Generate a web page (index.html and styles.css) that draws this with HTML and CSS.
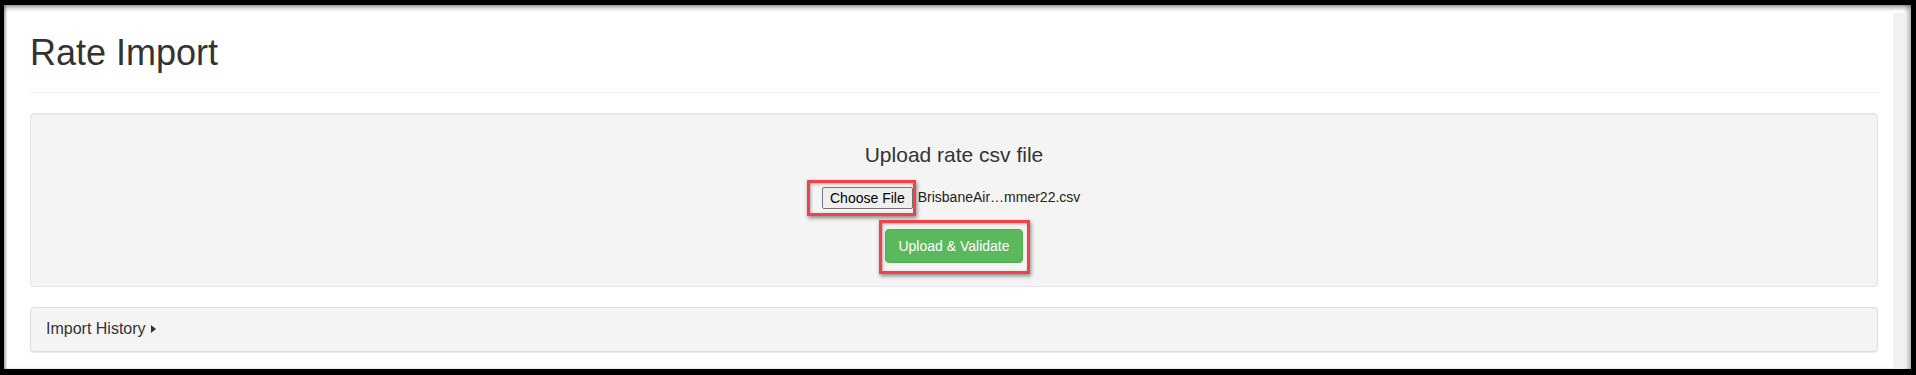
FILE: index.html
```html
<!DOCTYPE html>
<html lang="en">
<head>
  <meta charset="UTF-8" />
  <meta name="viewport" content="width=device-width, initial-scale=1" />
  <title>Rate Import</title>
  <link rel="stylesheet" href="styles.css">
</head>

<body>
  <div class="frame">
    <div class="window">
      <!-- Page content -->
      <main class="content">
        <div class="page-header">
          <h1>Rate Import</h1>
        </div>

        <!-- Upload box -->
        <div class="well upload">
          <h3>Upload rate csv file</h3>
          <div class="file-row">
            <span class="file-input">
              <span class="file-btn">Choose File<span class="mark mark-file"></span></span>
              <span class="file-name">BrisbaneAir…mmer22.csv</span>
            </span>
          </div>
          <div class="submit-row">
            <button class="btn btn-success" type="button">Upload &amp; Validate<span class="mark mark-submit"></span></button>
          </div>
        </div>

        <!-- History -->
        <div class="panel">
          <div class="panel-heading">Import History <span class="caret-right"></span></div>
        </div>
      </main>

      <div class="scroll-track"></div>
    </div>
  </div>
</body>
</html>
```

FILE: styles.css
```css
* {
  box-sizing: border-box;
}

body {
  margin: 0;
  height: 375px;
  overflow: hidden;
  background: #000;
  font-family: 'Liberation Sans', Arial, sans-serif;
  font-size: 14px;
  line-height: 1.42857;
  color: #333;
}

.frame {
  height: 100%;
  padding: 5px 5px 6px 4px;
}

.window {
  height: 100%;
  display: flex;
  background: #fff;
  padding-right: 6px;
  box-shadow:
    inset 0 4px 4px -1px rgba(0, 0, 0, 0.35),
    inset 2px 0 2px rgba(0, 0, 0, 0.25),
    inset -6px 0 4px -2px rgba(0, 0, 0, 0.22);
}

.content {
  flex: 1;
  padding: 28px 15px 0 26px;
}

.scroll-track {
  width: 12px;
  margin-top: 8px;
  background: #f1f1f1;
}

.page-header {
  padding-bottom: 9px;
  margin-bottom: 20px;
  border-bottom: 1px solid #eee;
}

.page-header h1 {
  margin: 0 0 10px;
  font-size: 36px;
  font-weight: 500;
  line-height: 1.1;
}

.well {
  background: #f4f4f4;
  border: 1px solid #e3e3e3;
  border-radius: 4px;
  box-shadow: inset 0 1px 1px rgba(0, 0, 0, 0.05);
  margin-bottom: 20px;
}

.upload {
  padding: 19px 19px 23px;
  text-align: center;
}

.upload h3 {
  margin: 10px 0 21px;
  font-size: 21px;
  font-weight: 500;
  line-height: 1.1;
}

.file-row {
  display: flex;
  justify-content: center;
}

.file-input {
  width: 264px;
  display: inline-flex;
  align-items: center;
  text-align: left;
}

.file-btn {
  position: relative;
  height: 22px;
  padding: 2px 7px;
  font-size: 14px;
  line-height: 16px;
  color: #000;
  background: #efefef;
  border: 1px solid #767676;
  border-radius: 2px;
  white-space: nowrap;
}

.file-name {
  margin-left: 5px;
  color: #222;
  white-space: nowrap;
}

.submit-row {
  margin-top: 20px;
}

.btn {
  position: relative;
  display: inline-block;
  padding: 6px 12px;
  font-family: inherit;
  font-size: 14px;
  line-height: 20px;
  border: 1px solid transparent;
  border-radius: 4px;
  cursor: pointer;
}

.btn-success {
  color: #fff;
  background-color: #5cb85c;
  border-color: #4cae4c;
}

/* red annotation boxes */
.mark {
  position: absolute;
  border: 3px solid #ef4349;
  box-shadow: 1px 2px 4px rgba(0, 0, 0, 0.45), inset 1px 1px 3px rgba(0, 0, 0, 0.3);
  pointer-events: none;
}

.mark-file {
  top: -8px;
  bottom: -8px;
  left: -16px;
  right: -4px;
}

.mark-submit {
  top: -10px;
  bottom: -12px;
  left: -7px;
  right: -8px;
}

.panel {
  background: #f4f4f4;
  border: 1px solid #ddd;
  border-radius: 4px;
  box-shadow: 0 1px 1px rgba(0, 0, 0, 0.08);
}

.panel-heading {
  padding: 10px 15px;
  font-size: 16px;
  color: #333;
}

.caret-right {
  display: inline-block;
  width: 0;
  height: 0;
  margin-left: 1px;
  vertical-align: 1px;
  border-left: 5px solid #333;
  border-top: 4px solid transparent;
  border-bottom: 4px solid transparent;
}
```
